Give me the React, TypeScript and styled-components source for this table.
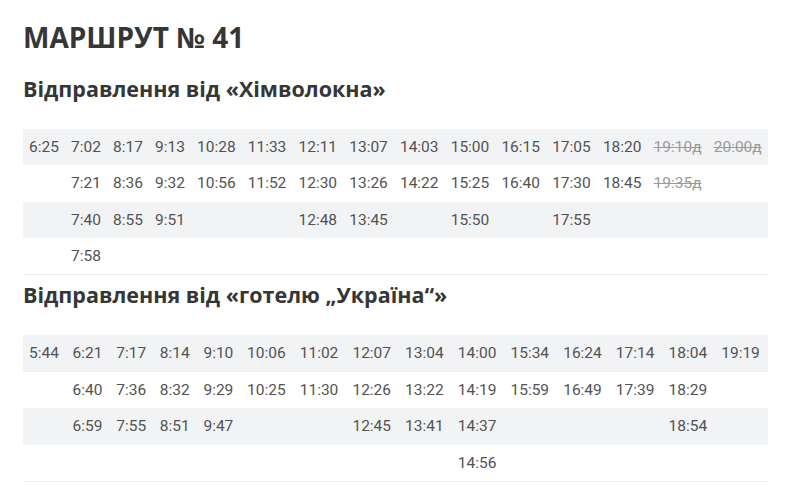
import React from 'react'
import styled, { createGlobalStyle } from 'styled-components'

type Cell = string | { off: string }

const fromKhimvolokno: Cell[][] = [
    ['6:25', '7:02', '8:17', '9:13', '10:28', '11:33', '12:11', '13:07', '14:03', '15:00', '16:15', '17:05', '18:20', { off: '19:10д' }, { off: '20:00д' }],
    ['', '7:21', '8:36', '9:32', '10:56', '11:52', '12:30', '13:26', '14:22', '15:25', '16:40', '17:30', '18:45', { off: '19:35д' }, ''],
    ['', '7:40', '8:55', '9:51', '', '', '12:48', '13:45', '', '15:50', '', '17:55', '', '', ''],
    ['', '7:58', '', '', '', '', '', '', '', '', '', '', '', '', ''],
]

const fromUkraina: Cell[][] = [
    ['5:44', '6:21', '7:17', '8:14', '9:10', '10:06', '11:02', '12:07', '13:04', '14:00', '15:34', '16:24', '17:14', '18:04', '19:19'],
    ['', '6:40', '7:36', '8:32', '9:29', '10:25', '11:30', '12:26', '13:22', '14:19', '15:59', '16:49', '17:39', '18:29', ''],
    ['', '6:59', '7:55', '8:51', '9:47', '', '', '12:45', '13:41', '14:37', '', '', '', '18:54', ''],
    ['', '', '', '', '', '', '', '', '', '14:56', '', '', '', '', ''],
]

function Timetable({ rows }: { rows: Cell[][] }) {
    return (
        <Table>
            <tbody>
                {rows.map((row, i) => (
                    <Row key={i}>
                        {row.map((cell, j) => (
                            <Time key={j}>
                                {typeof cell === 'string' ? cell : <Cancelled>{cell.off}</Cancelled>}
                            </Time>
                        ))}
                    </Row>
                ))}
            </tbody>
        </Table>
    )
}

function App() {
    return (
        <Page>
            <GlobalStyle />
            <Title>МАРШРУТ № 41</Title>
            <Subtitle>Відправлення від «Хімволокна»</Subtitle>
            <Timetable rows={fromKhimvolokno} />
            <Subtitle>Відправлення від «готелю „Україна“»</Subtitle>
            <Timetable rows={fromUkraina} />
        </Page>
    )
}

const GlobalStyle = createGlobalStyle`
    html, body {
        margin: 0;
        padding: 0;
        background: #ffffff;
    }
`

const Page = styled.div`
    width: 745px;
    padding: 21px 32px 0 23px;
`

const Title = styled.h1`
    margin: 0;
    font-family: 'Open Sans', 'Noto Sans', sans-serif;
    font-weight: 700;
    font-size: 28px;
    line-height: 1.2;
    color: #363636;
`

const Table = styled.table`
    width: 100%;
    border-collapse: collapse;
    border-bottom: 1px solid #ebebeb;
    font-family: Roboto, 'Liberation Sans', sans-serif;
    font-size: 15.5px;
    color: #525252;
`

const Subtitle = styled.h2`
    margin: 20px 0 26px;
    font-family: 'Open Sans', 'Noto Sans', sans-serif;
    font-weight: 700;
    font-size: 21.5px;
    line-height: 28px;
    color: #363636;

    ${Table} + & {
        margin-top: 6px;
    }
`

const Row = styled.tr`
    height: 36.5px;
    &:nth-child(odd) {
        background: #f2f3f5;
    }
`

const Time = styled.td`
    padding: 0 6px;
    white-space: nowrap;
    vertical-align: middle;
`

const Cancelled = styled.s`
    color: #9a9a9a;
`

export default App
